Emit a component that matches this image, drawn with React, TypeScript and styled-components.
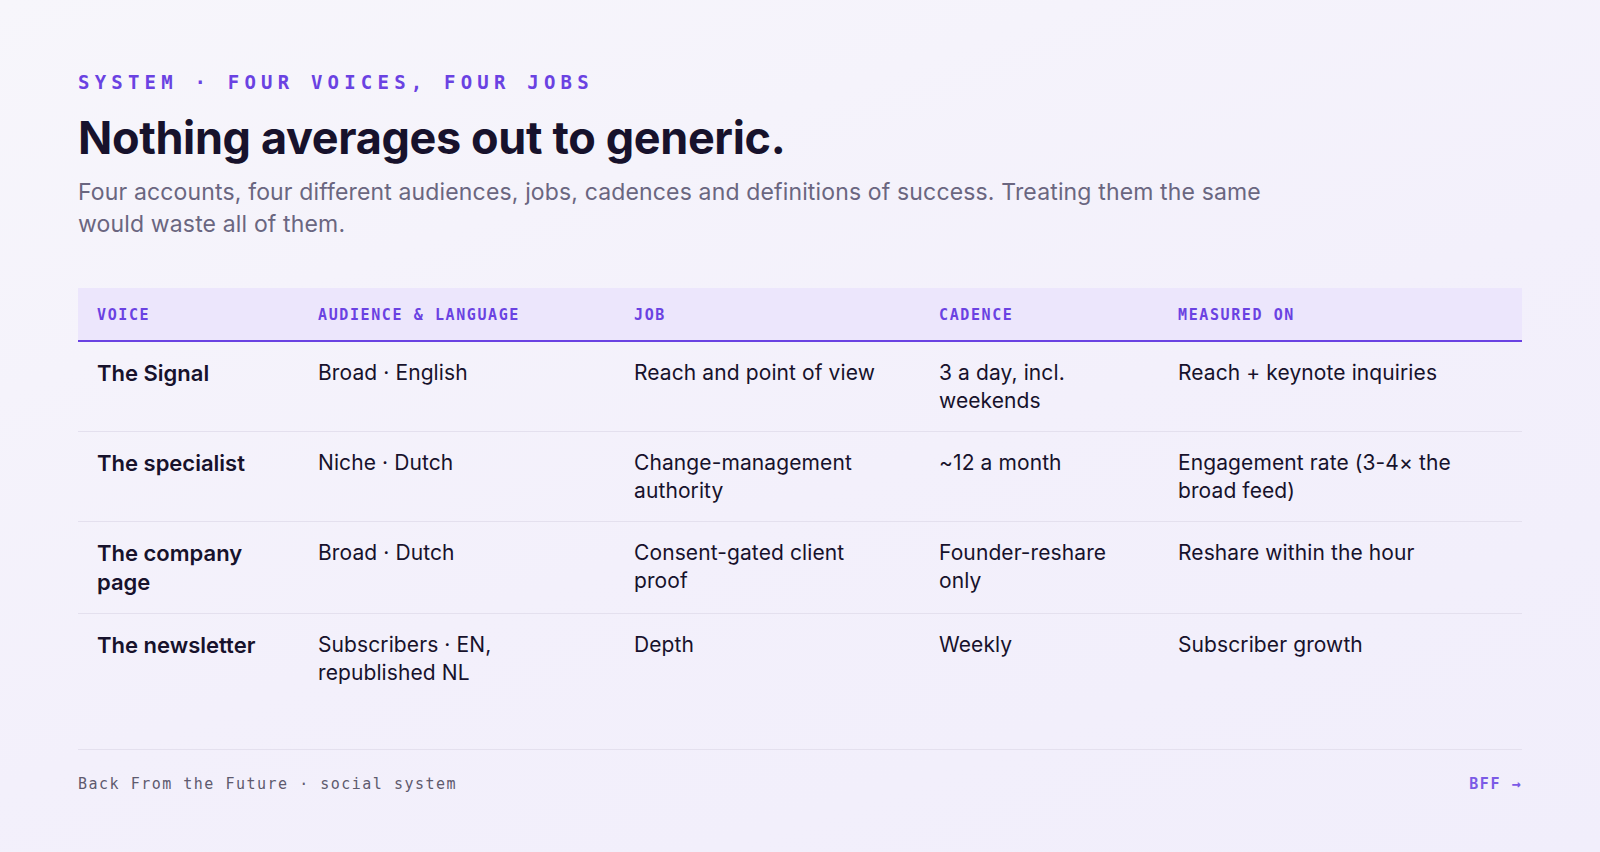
import React from "react";
import styled, { createGlobalStyle } from "styled-components";

const Global = createGlobalStyle`
  html, body { margin: 0; padding: 0; }
  body {
    background: #f5f3fb;
    font-family: Inter, "Noto Sans", sans-serif;
    -webkit-font-smoothing: antialiased;
  }
`;

const Page = styled.div`
  width: 1600px;
  height: 852px;
  box-sizing: border-box;
  padding: 70px 78px 0;
  background: linear-gradient(160deg, #f7f6fb 0%, #f3f0fb 55%, #f1eefb 100%);
  display: flex;
  flex-direction: column;
`;

const Eyebrow = styled.div`
  font-family: "DejaVu Sans Mono", "Liberation Mono", monospace;
  font-weight: 700;
  font-size: 19px;
  line-height: 24px;
  letter-spacing: 5.2px;
  color: #6a42e2;
  text-transform: uppercase;
`;

const Heading = styled.h1`
  margin: 20px 0 0;
  font-family: Inter, sans-serif;
  font-weight: 700;
  font-size: 45px;
  line-height: 48px;
  letter-spacing: -0.35px;
  color: #17122c;
`;

const Lede = styled.p`
  margin: 14px 0 0;
  max-width: 1220px;
  font-size: 23px;
  line-height: 32px;
  letter-spacing: 0.15px;
  color: #6a6680;
`;

const Table = styled.div`
  margin-top: 48px;
  display: flex;
  flex-direction: column;
`;

const cols = "221px 316px 305px 239px 1fr";

const HeadRow = styled.div`
  display: grid;
  grid-template-columns: ${cols};
  background: #ece6fc;
  border-bottom: 2px solid #6a42e2;
`;

const HeadCell = styled.div`
  padding: 18px 19px 16px;
  font-family: "DejaVu Sans Mono", "Liberation Mono", monospace;
  font-weight: 700;
  font-size: 15px;
  line-height: 18px;
  letter-spacing: 1.6px;
  color: #6a42e2;
  text-transform: uppercase;
`;

const Row = styled.div<{ $last?: boolean }>`
  display: grid;
  grid-template-columns: ${cols};
  border-bottom: 1px solid ${(p) => (p.$last ? "transparent" : "#e4e0ee")};
`;

const Cell = styled.div<{ $voice?: boolean }>`
  padding: 17px 19px 16px;
  font-size: ${(p) => (p.$voice ? "22px" : "21px")};
  line-height: ${(p) => (p.$voice ? "29px" : "28px")};
  font-weight: ${(p) => (p.$voice ? 600 : 400)};
  color: #17122c;
  letter-spacing: ${(p) => (p.$voice ? "0" : "0.1px")};
`;

const Footer = styled.div`
  margin-top: 45px;
  border-top: 1px solid #e4e0ee;
  padding-top: 24px;
  display: flex;
  justify-content: space-between;
  align-items: center;
  font-family: "DejaVu Sans Mono", "Liberation Mono", monospace;
  font-size: 15px;
  line-height: 20px;
  letter-spacing: 1.5px;
`;

const FootLeft = styled.span`
  color: #5e5a6e;
`;

const FootRight = styled.span`
  color: #7b5ae6;
  font-weight: 700;
`;

const headers = ["Voice", "Audience & language", "Job", "Cadence", "Measured on"];

const rows: string[][] = [
  ["The Signal", "Broad · English", "Reach and point of view", "3 a day, incl. weekends", "Reach + keynote inquiries"],
  ["The specialist", "Niche · Dutch", "Change-management authority", "~12 a month", "Engagement rate (3-4× the broad feed)"],
  ["The company page", "Broad · Dutch", "Consent-gated client proof", "Founder-reshare only", "Reshare within the hour"],
  ["The newsletter", "Subscribers · EN, republished NL", "Depth", "Weekly", "Subscriber growth"],
];

export default function App() {
  return (
    <>
      <Global />
      <Page>
        <Eyebrow>System · Four voices, four jobs</Eyebrow>
        <Heading>Nothing averages out to generic.</Heading>
        <Lede>
          Four accounts, four different audiences, jobs, cadences and definitions of success. Treating them the same
          would waste all of them.
        </Lede>
        <Table>
          <HeadRow>
            {headers.map((h) => (
              <HeadCell key={h}>{h}</HeadCell>
            ))}
          </HeadRow>
          {rows.map((r, i) => (
            <Row key={r[0]} $last={i === rows.length - 1}>
              {r.map((c, j) => (
                <Cell key={j} $voice={j === 0}>
                  {c}
                </Cell>
              ))}
            </Row>
          ))}
        </Table>
        <Footer>
          <FootLeft>Back From the Future · social system</FootLeft>
          <FootRight>BFF →</FootRight>
        </Footer>
      </Page>
    </>
  );
}
